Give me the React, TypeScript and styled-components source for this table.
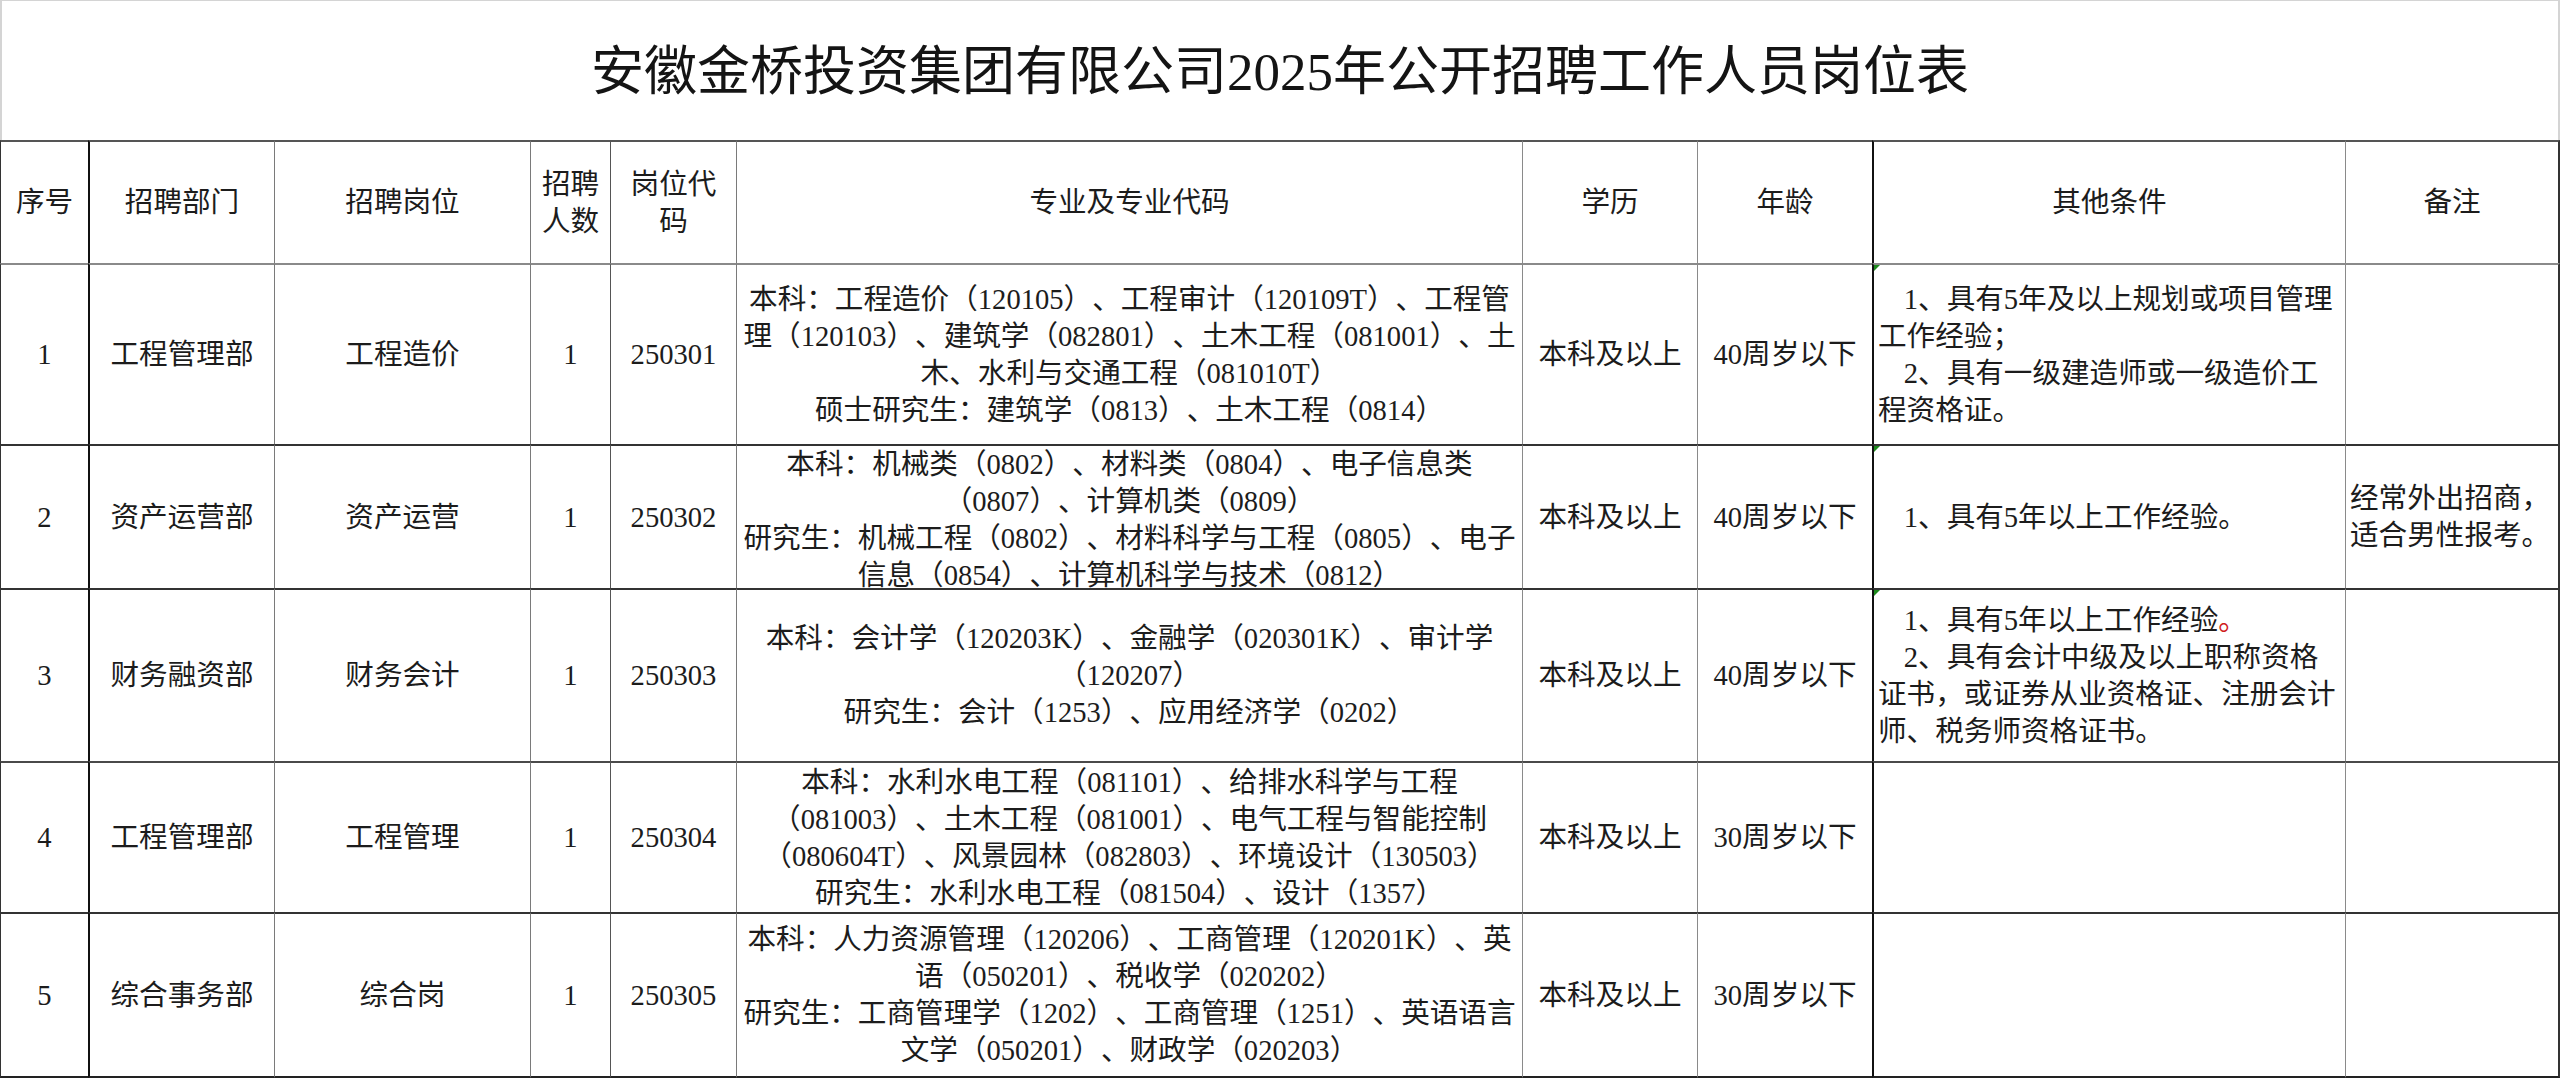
import React from "react";
import styled, { createGlobalStyle, css } from "styled-components";

type OtherLine = { text: string; indent?: boolean; redTail?: boolean };

type PostRow = {
  no: string;
  dept: string;
  post: string;
  count: string;
  code: string;
  majors: string[];
  edu: string;
  age: string;
  other: OtherLine[];
  note: string[];
  mark: boolean;
  height: number;
};

const GlobalStyle = createGlobalStyle`
  html, body {
    margin: 0;
    padding: 0;
    background: #ffffff;
  }
  body {
    font-family: "Liberation Serif", "Noto Sans CJK SC", serif;
    color: #1c1c1c;
    text-spacing-trim: space-all;
  }
`;

// widths of the columns, the last one takes what is left
const COL_WIDTHS = [88, 186, 256, 80, 126, 786, 175, 175, 473];
// colour of the rule on the left of each column
const COL_RULES = ["#333", "#111", "#7a7a7a", "#7a7a7a", "#555", "#7a7a7a", "#8a8a8a", "#8a8a8a", "#111", "#8a8a8a"];

const HEAD_HEIGHT = 123;

const rows: PostRow[] = [
  {
    no: "1",
    dept: "工程管理部",
    post: "工程造价",
    count: "1",
    code: "250301",
    majors: [
      "本科：工程造价（120105）、工程审计（120109T）、工程管",
      "理（120103）、建筑学（082801）、土木工程（081001）、土",
      "木、水利与交通工程（081010T）",
      "硕士研究生：建筑学（0813）、土木工程（0814）",
    ],
    edu: "本科及以上",
    age: "40周岁以下",
    other: [
      { text: "1、具有5年及以上规划或项目管理", indent: true },
      { text: "工作经验；" },
      { text: "2、具有一级建造师或一级造价工", indent: true },
      { text: "程资格证。" },
    ],
    note: [],
    mark: true,
    height: 181,
  },
  {
    no: "2",
    dept: "资产运营部",
    post: "资产运营",
    count: "1",
    code: "250302",
    majors: [
      "本科：机械类（0802）、材料类（0804）、电子信息类",
      "（0807）、计算机类（0809）",
      "研究生：机械工程（0802）、材料科学与工程（0805）、电子",
      "信息（0854）、计算机科学与技术（0812）",
    ],
    edu: "本科及以上",
    age: "40周岁以下",
    other: [{ text: "1、具有5年以上工作经验。", indent: true }],
    note: ["经常外出招商，", "适合男性报考。"],
    mark: true,
    height: 144,
  },
  {
    no: "3",
    dept: "财务融资部",
    post: "财务会计",
    count: "1",
    code: "250303",
    majors: [
      "本科：会计学（120203K）、金融学（020301K）、审计学",
      "（120207）",
      "研究生：会计（1253）、应用经济学（0202）",
    ],
    edu: "本科及以上",
    age: "40周岁以下",
    other: [
      { text: "1、具有5年以上工作经验。", indent: true, redTail: true },
      { text: "2、具有会计中级及以上职称资格", indent: true },
      { text: "证书，或证券从业资格证、注册会计" },
      { text: "师、税务师资格证书。" },
    ],
    note: [],
    mark: true,
    height: 173,
  },
  {
    no: "4",
    dept: "工程管理部",
    post: "工程管理",
    count: "1",
    code: "250304",
    majors: [
      "本科：水利水电工程（081101）、给排水科学与工程",
      "（081003）、土木工程（081001）、电气工程与智能控制",
      "（080604T）、风景园林（082803）、环境设计（130503）",
      "研究生：水利水电工程（081504）、设计（1357）",
    ],
    edu: "本科及以上",
    age: "30周岁以下",
    other: [],
    note: [],
    mark: false,
    height: 151,
  },
  {
    no: "5",
    dept: "综合事务部",
    post: "综合岗",
    count: "1",
    code: "250305",
    majors: [
      "本科：人力资源管理（120206）、工商管理（120201K）、英",
      "语（050201）、税收学（020202）",
      "研究生：工商管理学（1202）、工商管理（1251）、英语语言",
      "文学（050201）、财政学（020203）",
    ],
    edu: "本科及以上",
    age: "30周岁以下",
    other: [],
    note: [],
    mark: false,
    height: 166,
  },
];

const ROW_RULES = ["#8a8a8a", "#333", "#333", "#4a4a4a", "#333"];

const Sheet = styled.div`
  width: 2560px;
  height: 1080px;
  overflow: hidden;
  background: #fff;
`;

const TitleBar = styled.div`
  height: 140px;
  box-sizing: border-box;
  border-top: 1px solid #d4d4d4;
  border-left: 2px solid #d4d4d4;
  border-right: 2px solid #d4d4d4;
  display: flex;
  align-items: center;
  justify-content: center;
  padding-top: 2px;
  font-size: 53px;
  line-height: 60px;
  color: #141414;
  white-space: nowrap;
`;

const Grid = styled.div<{ $rows: string }>`
  display: grid;
  grid-template-columns: ${COL_WIDTHS.map((w) => `${w}px`).join(" ")} 1fr;
  grid-template-rows: ${(p) => p.$rows};
  font-size: 28.6px;
`;

type CellProps = {
  $rule: string;
  $top: string;
  $left?: boolean;
  $last?: boolean;
  $bottom?: boolean;
};

const Cell = styled.div<CellProps>`
  position: relative;
  box-sizing: border-box;
  min-width: 0;
  overflow: hidden;
  display: flex;
  flex-direction: column;
  justify-content: safe center;
  align-items: ${(p) => (p.$left ? "flex-start" : "center")};
  text-align: ${(p) => (p.$left ? "left" : "center")};
  padding: 0 ${(p) => (p.$left ? "4px" : "2px")};
  border-left: ${(p) => (p.$rule === "#111" ? "2px" : "1px")} solid ${(p) => p.$rule};
  border-top: 2px solid ${(p) => p.$top};
  ${(p) =>
    p.$last &&
    css`
      border-right: 2px solid #333;
    `}
  ${(p) =>
    p.$bottom &&
    css`
      border-bottom: 2px solid #222;
    `}
`;

const Line = styled.div<{ $indent?: boolean }>`
  white-space: nowrap;
  line-height: 37px;
  padding-left: ${(p) => (p.$indent ? "0.9em" : "0")};
`;

const RedMark = styled.span`
  color: #d01c1c;
`;

const CornerFlag = styled.span`
  position: absolute;
  top: 0;
  left: 0;
  width: 0;
  height: 0;
  border-top: 6px solid #1e8a1e;
  border-right: 6px solid transparent;
`;

const headers: string[][] = [
  ["序号"],
  ["招聘部门"],
  ["招聘岗位"],
  ["招聘", "人数"],
  ["岗位代", "码"],
  ["专业及专业代码"],
  ["学历"],
  ["年龄"],
  ["其他条件"],
  ["备注"],
];

const renderOther = (line: OtherLine, i: number) => (
  <Line key={i} $indent={line.indent}>
    {line.redTail ? (
      <>
        {line.text.slice(0, -1)}
        <RedMark>{line.text.slice(-1)}</RedMark>
      </>
    ) : (
      line.text
    )}
  </Line>
);

export default function App() {
  const rowTemplate = [HEAD_HEIGHT, ...rows.map((r) => r.height)].map((h) => `${h}px`).join(" ");

  return (
    <>
      <GlobalStyle />
      <Sheet>
        <TitleBar>安徽金桥投资集团有限公司2025年公开招聘工作人员岗位表</TitleBar>
        <Grid $rows={rowTemplate}>
          {headers.map((lines, c) => (
            <Cell key={`h${c}`} $rule={COL_RULES[c]} $top="#555" $last={c === 9}>
              {lines.map((l) => (
                <Line key={l}>{l}</Line>
              ))}
            </Cell>
          ))}
          {rows.map((r, ri) => {
            const top = ROW_RULES[ri];
            const bottom = ri === rows.length - 1;
            const simple = [r.no, r.dept, r.post, r.count, r.code];
            return (
              <React.Fragment key={r.no}>
                {simple.map((v, c) => (
                  <Cell key={c} $rule={COL_RULES[c]} $top={top} $bottom={bottom}>
                    <Line>{v}</Line>
                  </Cell>
                ))}
                <Cell $rule={COL_RULES[5]} $top={top} $bottom={bottom}>
                  {r.majors.map((m, i) => (
                    <Line key={i}>{m}</Line>
                  ))}
                </Cell>
                <Cell $rule={COL_RULES[6]} $top={top} $bottom={bottom}>
                  <Line>{r.edu}</Line>
                </Cell>
                <Cell $rule={COL_RULES[7]} $top={top} $bottom={bottom}>
                  <Line>{r.age}</Line>
                </Cell>
                <Cell $rule={COL_RULES[8]} $top={top} $bottom={bottom} $left>
                  {r.mark && <CornerFlag />}
                  {r.other.map(renderOther)}
                </Cell>
                <Cell $rule={COL_RULES[9]} $top={top} $bottom={bottom} $left $last>
                  {r.note.map((n, i) => (
                    <Line key={i}>{n}</Line>
                  ))}
                </Cell>
              </React.Fragment>
            );
          })}
        </Grid>
      </Sheet>
    </>
  );
}
